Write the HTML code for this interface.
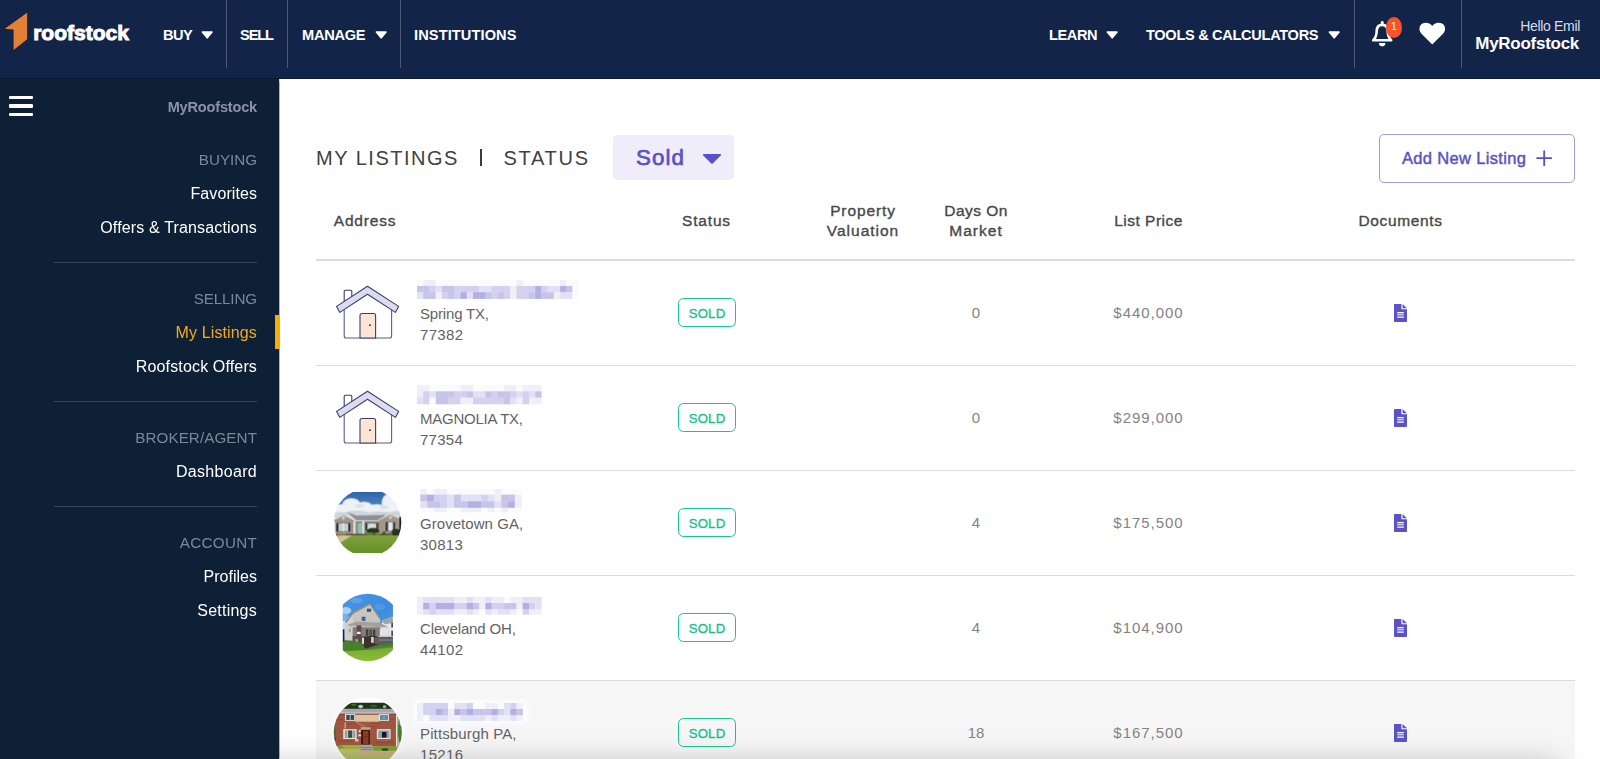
<!DOCTYPE html>
<html><head><meta charset="utf-8"><title>MyRoofstock</title>
<style>
*{box-sizing:border-box;margin:0;padding:0}
html,body{width:1600px;height:759px;overflow:hidden;background:#fff;font-family:"Liberation Sans",sans-serif;}
.abs{position:absolute}
#hdr{position:absolute;left:0;top:0;width:1600px;height:79px;background:#122448;border-bottom:1px solid #0b1737;}
.nv{position:absolute;top:25.6px;height:18px;line-height:18px;font-size:14.6px;font-weight:700;color:#fff;white-space:nowrap;transform-origin:0 50%;}
.vd{position:absolute;top:0;width:1px;height:68px;background:#4a5873;}
.car{position:absolute;width:0;height:0;border-left:6.5px solid transparent;border-right:6.5px solid transparent;border-top:7px solid #fff;top:31px}
#side{z-index:2;box-shadow:.5px 0 1px rgba(0,0,0,.3);position:absolute;left:0;top:79px;width:279px;height:680px;background:#0e2036;}
.si{position:absolute;right:22px;white-space:nowrap;color:#fff;font-size:16px;height:20px;line-height:20px;transform-origin:100% 50%;}
.sh{color:#7c8797;font-size:15.2px}
.sd{position:absolute;left:54px;width:203px;height:1px;background:#35465d}
#main{position:absolute;left:279px;top:79px;width:1321px;height:680px;background:#fff;}
.th{position:absolute;font-size:15.5px;font-weight:400;-webkit-text-stroke:.36px #484848;color:#484848;text-align:center;line-height:20px;white-space:nowrap;transform:translateX(-50%);}
.hl{position:absolute;left:316px;width:1259px;height:1px;background:#dcdcdc}
.sold{position:absolute;left:678px;width:58px;height:29.3px;border:1.3px solid #19c492;border-radius:5.5px;color:#12bf8c;font-size:13.2px;font-weight:400;-webkit-text-stroke:.32px #12bf8c;text-align:center;line-height:29.2px;letter-spacing:.2px}
.td{position:absolute;font-size:15px;color:#838383;text-align:center;white-space:nowrap;transform:translateX(-50%);line-height:20px;height:20px}
.ad{position:absolute;left:420px;font-size:15px;color:#636363;line-height:20.5px;white-space:nowrap}
.doc{position:absolute;left:1394px;width:13px;height:18px}
</style><style id="fit">#logo{letter-spacing:0.014px}#n1{letter-spacing:-0.556px}#n2{letter-spacing:-1.099px}#n3{letter-spacing:-0.275px}#n4{letter-spacing:0.104px}#n5{letter-spacing:-0.420px}#n6{letter-spacing:-0.321px}#hello{letter-spacing:-0.335px}#myr{letter-spacing:-0.273px}#s0{letter-spacing:-0.155px}#s1{letter-spacing:-0.007px}#s2{letter-spacing:0.075px}#s3{letter-spacing:0.153px}#s4{letter-spacing:-0.126px}#s5{letter-spacing:0.137px}#s6{letter-spacing:0.143px}#s7{letter-spacing:0.092px}#s8{letter-spacing:0.315px}#s9{letter-spacing:0.301px}#s10{letter-spacing:0.006px}#s11{letter-spacing:0.241px}#ttl{letter-spacing:1.507px}#sts{letter-spacing:1.712px}#sld{letter-spacing:1.120px}#anl{letter-spacing:0.340px}#h1{letter-spacing:0.804px}#h2{letter-spacing:0.809px}#h3a{letter-spacing:0.887px}#h3b{letter-spacing:0.989px}#h4a{letter-spacing:0.448px}#h4b{letter-spacing:1.025px}#h5{letter-spacing:0.494px}#h6{letter-spacing:0.649px}#a0a{letter-spacing:-0.177px}#a0b{letter-spacing:0.320px}#a1a{letter-spacing:-0.236px}#a1b{letter-spacing:0.270px}#a2a{letter-spacing:0.054px}#a2b{letter-spacing:0.270px}#a3a{letter-spacing:-0.129px}#a3b{letter-spacing:0.320px}#a4a{letter-spacing:0.132px}#a4b{letter-spacing:0.320px}#p0{letter-spacing:0.975px}#p1{letter-spacing:0.975px}#p2{letter-spacing:0.975px}#p3{letter-spacing:0.975px}#p4{letter-spacing:0.975px}</style></head><body>
<div id="hdr">
<svg class="abs" style="left:0;top:0" width="140" height="79" viewBox="0 0 140 79">
<polygon points="27.1,12.7 27.1,39.3 13.6,50.1 13.6,29.5 4.8,28.8" fill="#e38036"/>
</svg>
<div class="abs" id="logo" style="left:33.2px;top:20.4px;font-size:21px;font-weight:700;color:#fff;line-height:26px;-webkit-text-stroke:1px #fff">roofstock</div>
<div class="nv" id="n1" style="left:163px">BUY</div><svg class="abs" style="left:201px;top:30.6px" width="12.4" height="8" viewBox="0 0 12.4 8"><path d="M1.3 0.3 H11.1 a0.75 0.75 0 0 1 0.55 1.25 L6.85 7.35 a0.85 0.85 0 0 1 -1.3 0 L0.75 1.55 A0.75 0.75 0 0 1 1.3 0.3 Z" fill="#fff"/></svg>
<div class="vd" style="left:226px"></div>
<div class="nv" id="n2" style="left:240px">SELL</div>
<div class="vd" style="left:287px"></div>
<div class="nv" id="n3" style="left:302px">MANAGE</div><svg class="abs" style="left:374.7px;top:30.6px" width="12.4" height="8" viewBox="0 0 12.4 8"><path d="M1.3 0.3 H11.1 a0.75 0.75 0 0 1 0.55 1.25 L6.85 7.35 a0.85 0.85 0 0 1 -1.3 0 L0.75 1.55 A0.75 0.75 0 0 1 1.3 0.3 Z" fill="#fff"/></svg>
<div class="vd" style="left:400px"></div>
<div class="nv" id="n4" style="left:414px">INSTITUTIONS</div>
<div class="nv" id="n5" style="left:1049px">LEARN</div><svg class="abs" style="left:1106.4px;top:30.6px" width="12.4" height="8" viewBox="0 0 12.4 8"><path d="M1.3 0.3 H11.1 a0.75 0.75 0 0 1 0.55 1.25 L6.85 7.35 a0.85 0.85 0 0 1 -1.3 0 L0.75 1.55 A0.75 0.75 0 0 1 1.3 0.3 Z" fill="#fff"/></svg>
<div class="nv" id="n6" style="left:1146px">TOOLS &amp; CALCULATORS</div><svg class="abs" style="left:1328.2px;top:30.6px" width="12.4" height="8" viewBox="0 0 12.4 8"><path d="M1.3 0.3 H11.1 a0.75 0.75 0 0 1 0.55 1.25 L6.85 7.35 a0.85 0.85 0 0 1 -1.3 0 L0.75 1.55 A0.75 0.75 0 0 1 1.3 0.3 Z" fill="#fff"/></svg>
<div class="vd" style="left:1354px"></div>
<svg class="abs" style="left:1368px;top:18px" width="30" height="32" viewBox="0 0 30 32">
<path d="M14.2 6.9 C10.2 6.9 8.8 9.8 8.7 13 C8.6 17 7.8 19.8 5.2 22.3 L23.2 22.3 C20.6 19.8 19.8 17 19.7 13 C19.6 9.8 18.2 6.9 14.2 6.9 Z" fill="none" stroke="#fff" stroke-width="2.6" stroke-linejoin="round"/>
<rect x="12.8" y="3.1" width="2.9" height="4" rx="1.3" fill="#fff"/>
<path d="M11 25.1 a3.2 3.3 0 0 0 6.4 0 Z" fill="#fff"/>
</svg>
<div class="abs" style="left:1386px;top:16.8px;width:15.8px;height:21px;border-radius:50%;background:#f8532a;color:#fff;font-size:11px;line-height:19px;text-align:center">1</div>
<svg class="abs" style="left:1418.8px;top:22.2px" width="26.5" height="23.6" viewBox="0 0 26 24" preserveAspectRatio="none">
<path d="M13 23 L2.2 11.6 C-0.6 8.4 0 3.6 3.4 1.6 C6.4 -0.2 10.4 0.6 13 4 C15.6 0.6 19.6 -0.2 22.6 1.6 C26 3.6 26.6 8.4 23.8 11.6 Z" fill="#fff"/>
</svg>
<div class="vd" style="left:1461px"></div>
<div class="abs" id="hello" style="right:20px;top:17px;font-size:14px;color:#d9dde5;line-height:18px;white-space:nowrap">Hello Emil</div>
<div class="abs" id="myr" style="right:21px;top:34px;font-size:17px;font-weight:700;color:#fff;line-height:20px;white-space:nowrap">MyRoofstock</div>
</div>
<div id="side">
<div class="abs" style="left:9px;top:17px;width:24px;height:3.4px;background:#fff;border-radius:1px"></div>
<div class="abs" style="left:9px;top:25.3px;width:24px;height:3.4px;background:#fff;border-radius:1px"></div>
<div class="abs" style="left:9px;top:33.6px;width:24px;height:3.4px;background:#fff;border-radius:1px"></div>
<div class="si" id="s0" style="top:18px;color:#8a93a6;font-weight:700;font-size:14.5px">MyRoofstock</div>
<div class="si sh" id="s1" style="top:71.4px">BUYING</div>
<div class="si" id="s2" style="top:105.3px">Favorites</div>
<div class="si" id="s3" style="top:139.3px">Offers &amp; Transactions</div>
<div class="sd" style="top:182.6px"></div>
<div class="si sh" id="s4" style="top:210.4px">SELLING</div>
<div class="si" id="s5" style="top:244.3px;color:#f5a81c">My Listings</div>
<div class="abs" style="left:275px;top:236px;width:4.8px;height:34px;background:#fbaa08"></div>
<div class="si" id="s6" style="top:278.3px">Roofstock Offers</div>
<div class="sd" style="top:322px"></div>
<div class="si sh" id="s7" style="top:349.4px">BROKER/AGENT</div>
<div class="si" id="s8" style="top:383.3px">Dashboard</div>
<div class="sd" style="top:426.8px"></div>
<div class="si sh" id="s9" style="top:454.4px">ACCOUNT</div>
<div class="si" id="s10" style="top:488.3px">Profiles</div>
<div class="si" id="s11" style="top:522.3px">Settings</div>
</div>
<div id="main"></div>
<div class="abs" id="ttl" style="left:316px;top:145px;font-size:20px;line-height:26px;color:#414141;white-space:nowrap">MY LISTINGS</div>
<div class="abs" style="left:480px;top:149px;width:2.2px;height:17px;background:#3a3a3a"></div>
<div class="abs" id="sts" style="left:503.5px;top:145px;font-size:20px;line-height:26px;color:#414141;white-space:nowrap">STATUS</div>
<div class="abs" style="left:613px;top:135px;width:121.3px;height:45px;background:#eeedf9;border-radius:5px"></div>
<div class="abs" id="sld" style="left:636px;top:143.4px;font-size:22.3px;font-weight:400;-webkit-text-stroke:.7px #5a51c8;line-height:30px;color:#5a51c8;white-space:nowrap">Sold</div>
<svg class="abs" style="left:702px;top:153px" width="20" height="12" viewBox="0 0 20 12"><path d="M1.6 1 H18.4 a0.8 0.8 0 0 1 0.6 1.3 L10.7 10.6 a1 1 0 0 1 -1.4 0 L1 2.3 A0.8 0.8 0 0 1 1.6 1 Z" fill="#5a51c8"/></svg>
<div class="abs" style="left:1379px;top:133.5px;width:196px;height:49px;border:1px solid #a19ce2;border-radius:5px;background:#fff"></div>
<div class="abs" id="anl" style="left:1402px;top:147px;font-size:16.5px;font-weight:400;-webkit-text-stroke:.45px #5952c5;line-height:22px;color:#5952c5;white-space:nowrap">Add New Listing</div>
<svg class="abs" style="left:1535.5px;top:150px" width="16.4" height="16.4" viewBox="0 0 18 18"><path d="M9 1.2 V16.8 M1.2 9 H16.8" stroke="#574fc4" stroke-width="2" stroke-linecap="round"/></svg>
<div class="th" id="h1" style="left:365px;top:211px">Address</div>
<div class="th" id="h2" style="left:706.5px;top:211px">Status</div>
<div class="th" id="h3" style="left:863px;top:201px"><span id="h3a">Property</span><br><span id="h3b">Valuation</span></div>
<div class="th" id="h4" style="left:976px;top:201px"><span id="h4a">Days On</span><br><span id="h4b">Market</span></div>
<div class="th" id="h5" style="left:1148.5px;top:211px">List Price</div>
<div class="th" id="h6" style="left:1400.5px;top:211px">Documents</div>
<div class="hl" style="top:259.3px;height:1.4px"></div>
<svg class="abs" style="left:334px;top:284.8px" width="68" height="58" viewBox="0 0 68 58">
<path d="M10.2 17.5 V6.2 a1 1 0 0 1 1 -1 h5.6 a1 1 0 0 1 1 1 V12" fill="#fff" stroke="#3a3d6b" stroke-width="1.1"/>
<path d="M10.2 24 V51 a2 2 0 0 0 2 2 H55.6 a2 2 0 0 0 2 -2 V24" fill="#fff" stroke="#5b5f8e" stroke-width="1.1"/>
<path d="M33.5 1.2 L2.6 21.4 L5.8 27.4 L33.5 9.2 L61.4 27.4 L64.6 21.4 Z" fill="#dcdcf1" stroke="#3a3d6b" stroke-width="1.1" stroke-linejoin="round"/>
<path d="M26 53 V30.5 a2 2 0 0 1 2 -2 h11.6 a2 2 0 0 1 2 2 V53 Z" fill="#fde5d6" stroke="#3a3d6b" stroke-width="1.1"/>
<circle cx="36" cy="40.2" r="0.9" fill="#23264f"/>
</svg>
<div class="ad" id="a0" style="top:304px"><span id="a0a">Spring TX,</span><br><span id="a0b">77382</span></div>
<div class="sold" style="top:298px">SOLD</div>
<div class="td" id="d0" style="left:976px;top:303px">0</div>
<div class="td" id="p0" style="left:1148.5px;top:303px">$440,000</div>
<svg class="doc" style="top:304px" viewBox="0 0 13 18"><path d="M0.8 0 H7.4 V4.4 a0.9 0.9 0 0 0 0.9 0.9 H13 V17.2 a0.8 0.8 0 0 1 -0.8 0.8 H0.8 a0.8 0.8 0 0 1 -0.8 -0.8 V0.8 a0.8 0.8 0 0 1 0.8 -0.8 Z M8.6 0.1 L13 4.2 H8.6 Z" fill="#5a53c7"/><path d="M3.2 8.6 h6.6 M3.2 10.8 h6.6 M3.2 13.1 h6.6" stroke="#fff" stroke-width="1.1"/></svg>
<div class="hl" style="top:364.5px;height:1.3px"></div>
<svg class="abs" style="left:334px;top:389.8px" width="68" height="58" viewBox="0 0 68 58">
<path d="M10.2 17.5 V6.2 a1 1 0 0 1 1 -1 h5.6 a1 1 0 0 1 1 1 V12" fill="#fff" stroke="#3a3d6b" stroke-width="1.1"/>
<path d="M10.2 24 V51 a2 2 0 0 0 2 2 H55.6 a2 2 0 0 0 2 -2 V24" fill="#fff" stroke="#5b5f8e" stroke-width="1.1"/>
<path d="M33.5 1.2 L2.6 21.4 L5.8 27.4 L33.5 9.2 L61.4 27.4 L64.6 21.4 Z" fill="#dcdcf1" stroke="#3a3d6b" stroke-width="1.1" stroke-linejoin="round"/>
<path d="M26 53 V30.5 a2 2 0 0 1 2 -2 h11.6 a2 2 0 0 1 2 2 V53 Z" fill="#fde5d6" stroke="#3a3d6b" stroke-width="1.1"/>
<circle cx="36" cy="40.2" r="0.9" fill="#23264f"/>
</svg>
<div class="ad" id="a1" style="top:409px"><span id="a1a">MAGNOLIA TX,</span><br><span id="a1b">77354</span></div>
<div class="sold" style="top:403px">SOLD</div>
<div class="td" id="d1" style="left:976px;top:408px">0</div>
<div class="td" id="p1" style="left:1148.5px;top:408px">$299,000</div>
<svg class="doc" style="top:409px" viewBox="0 0 13 18"><path d="M0.8 0 H7.4 V4.4 a0.9 0.9 0 0 0 0.9 0.9 H13 V17.2 a0.8 0.8 0 0 1 -0.8 0.8 H0.8 a0.8 0.8 0 0 1 -0.8 -0.8 V0.8 a0.8 0.8 0 0 1 0.8 -0.8 Z M8.6 0.1 L13 4.2 H8.6 Z" fill="#5a53c7"/><path d="M3.2 8.6 h6.6 M3.2 10.8 h6.6 M3.2 13.1 h6.6" stroke="#fff" stroke-width="1.1"/></svg>
<div class="hl" style="top:469.5px;height:1.3px"></div>
<svg class="abs" style="left:325px;top:482px" width="86" height="80" viewBox="0 0 816 759">
<defs><clipPath id="c1"><circle cx="403.5" cy="384" r="321"/></clipPath><clipPath id="c1b"><rect x="0" y="101" width="816" height="567"/></clipPath>
<linearGradient id="sk1" x1="0" y1="0" x2="0" y2="1"><stop offset="0" stop-color="#2a61a6"/><stop offset="1" stop-color="#6f9fd2"/></linearGradient>
<linearGradient id="gr1" x1="0" y1="0" x2="0" y2="1"><stop offset="0" stop-color="#7ea23a"/><stop offset="1" stop-color="#648f28"/></linearGradient>
<filter id="b1" x="-5%" y="-5%" width="110%" height="110%"><feGaussianBlur stdDeviation="5"/></filter></defs>
<g clip-path="url(#c1b)"><g clip-path="url(#c1)"><g filter="url(#b1)">
<rect x="60" y="80" width="700" height="260" fill="url(#sk1)"/>
<g fill="#eef1f5"><ellipse cx="250" cy="215" rx="85" ry="62"/><ellipse cx="370" cy="245" rx="85" ry="58"/><ellipse cx="160" cy="270" rx="85" ry="60"/><ellipse cx="490" cy="265" rx="105" ry="55"/><ellipse cx="600" cy="195" rx="62" ry="80"/><ellipse cx="650" cy="260" rx="85" ry="65"/><rect x="60" y="265" width="700" height="70"/></g>
<g fill="#c3cad3" opacity=".75"><ellipse cx="300" cy="300" rx="120" ry="28"/><ellipse cx="520" cy="305" rx="130" ry="25"/><ellipse cx="140" cy="310" rx="70" ry="25"/><ellipse cx="680" cy="300" rx="60" ry="25"/><ellipse cx="330" cy="225" rx="40" ry="18" opacity=".5"/><ellipse cx="560" cy="240" rx="40" ry="20" opacity=".5"/></g>
<polygon points="215,288 300,318 572,312 520,368 380,368 290,362" fill="#8c8f96"/>
<polygon points="88,352 178,310 292,364 292,380 88,380" fill="#8c8f96"/>
<polygon points="503,360 618,303 716,346 716,380 503,380" fill="#8c8f96"/>
<polygon points="95,358 178,320 288,368 288,498 95,498" fill="#a09585"/>
<rect x="285" y="366" width="235" height="132" fill="#8c8172"/>
<polygon points="515,362 618,313 712,352 712,498 515,498" fill="#a39888"/>
<g stroke="#eeeeee" stroke-width="8" fill="none"><path d="M90 354 L178 314 L290 366"/><path d="M505 360 L618 307 L714 348"/><path d="M288 368 H515"/></g>
<circle cx="175" cy="343" r="14" fill="#d9d4cc"/><circle cx="620" cy="338" r="14" fill="#d9d4cc"/>
<rect x="108" y="390" width="132" height="80" fill="#272a35"/><rect x="127" y="393" width="94" height="74" fill="#c3cdce"/><rect x="168" y="390" width="12" height="80" fill="#f0f0f0"/>
<rect x="386" y="392" width="116" height="66" fill="#272a35"/><rect x="402" y="394" width="84" height="62" fill="#d3dbde"/><rect x="438" y="392" width="10" height="66" fill="#f0f0f0"/>
<rect x="576" y="380" width="88" height="86" fill="#272a35"/><rect x="597" y="382" width="48" height="82" fill="#dfe7eb"/>
<rect x="270" y="370" width="20" height="128" fill="#e8e6e2"/><rect x="352" y="370" width="20" height="128" fill="#e8e6e2"/>
<rect x="311" y="392" width="40" height="98" fill="#8bc3bf"/>
<rect x="100" y="492" width="610" height="20" fill="#5d4b3a"/>
<ellipse cx="455" cy="465" rx="58" ry="30" fill="#25321e"/><ellipse cx="425" cy="492" rx="40" ry="14" fill="#5f7f3c"/><ellipse cx="495" cy="492" rx="25" ry="14" fill="#6a8a44"/>
<ellipse cx="672" cy="477" rx="40" ry="32" fill="#25321e"/><ellipse cx="560" cy="488" rx="18" ry="20" fill="#3e5c2c"/><ellipse cx="620" cy="492" rx="22" ry="12" fill="#5a7a3a"/>
<ellipse cx="160" cy="494" rx="45" ry="10" fill="#8a9a55"/>
<rect x="705" y="330" width="30" height="170" fill="#1e291b"/>
<rect x="60" y="508" width="700" height="180" fill="url(#gr1)"/>
<polygon points="100,512 255,507 150,572 110,560" fill="#d9bea3"/>
</g></g></g></svg>
<div class="ad" id="a2" style="top:514px"><span id="a2a">Grovetown GA,</span><br><span id="a2b">30813</span></div>
<div class="sold" style="top:508px">SOLD</div>
<div class="td" id="d2" style="left:976px;top:513px">4</div>
<div class="td" id="p2" style="left:1148.5px;top:513px">$175,500</div>
<svg class="doc" style="top:514px" viewBox="0 0 13 18"><path d="M0.8 0 H7.4 V4.4 a0.9 0.9 0 0 0 0.9 0.9 H13 V17.2 a0.8 0.8 0 0 1 -0.8 0.8 H0.8 a0.8 0.8 0 0 1 -0.8 -0.8 V0.8 a0.8 0.8 0 0 1 0.8 -0.8 Z M8.6 0.1 L13 4.2 H8.6 Z" fill="#5a53c7"/><path d="M3.2 8.6 h6.6 M3.2 10.8 h6.6 M3.2 13.1 h6.6" stroke="#fff" stroke-width="1.1"/></svg>
<div class="hl" style="top:574.5px;height:1.3px"></div>
<svg class="abs" style="left:325px;top:588px" width="86" height="80" viewBox="0 0 816 759">
<defs><clipPath id="c2"><circle cx="406" cy="374" r="320"/></clipPath><clipPath id="c2b"><rect x="168" y="0" width="477" height="759"/></clipPath>
<linearGradient id="sk2" x1="0" y1="0" x2="1" y2="1"><stop offset="0" stop-color="#4f97e4"/><stop offset=".5" stop-color="#3b8be0"/><stop offset="1" stop-color="#5fa3e6"/></linearGradient>
<linearGradient id="gr2" x1="0" y1="0" x2="0" y2="1"><stop offset="0" stop-color="#74ad2c"/><stop offset="1" stop-color="#8fc03c"/></linearGradient>
<filter id="b2" x="-5%" y="-5%" width="110%" height="110%"><feGaussianBlur stdDeviation="5"/></filter></defs>
<g clip-path="url(#c2b)"><g clip-path="url(#c2)"><g filter="url(#b2)">
<rect x="100" y="30" width="620" height="560" fill="url(#sk2)"/>
<ellipse cx="200" cy="215" rx="50" ry="34" fill="#b5d4f4" opacity=".9"/><ellipse cx="190" cy="290" rx="40" ry="50" fill="#8fbdee" opacity=".7"/><ellipse cx="180" cy="350" rx="25" ry="40" fill="#cfe3f7" opacity=".9"/><ellipse cx="300" cy="120" rx="60" ry="25" fill="#6aa8ea" opacity=".7"/><ellipse cx="520" cy="180" rx="50" ry="30" fill="#5da0e8" opacity=".6"/>
<rect x="168" y="470" width="480" height="120" fill="#55603f"/><polygon points="540,310 640,272 660,300 660,520 530,520" fill="#e6e7ec"/>
<polygon points="535,315 640,270 650,330 570,345" fill="#9fa3a6"/>
<rect x="583" y="395" width="16" height="60" fill="#2c3340"/><rect x="630" y="330" width="14" height="45" fill="#2c3340"/><rect x="630" y="405" width="14" height="50" fill="#2c3340"/>
<polygon points="185,330 270,232 270,500 185,495" fill="#d3d0ca"/>
<polygon points="265,238 425,150 528,292 520,335 265,335" fill="#c9c6c0"/>
<polygon points="190,322 262,228 425,143 535,298 520,298 425,160 272,242 200,335" fill="#8f8c88"/>
<polygon points="215,348 300,318 520,330 605,375 250,372" fill="#a5a19a"/>
<polygon points="250,360 600,372 600,385 250,375" fill="#d8d5cf"/>
<rect x="262" y="372" width="262" height="130" fill="#857e72"/><rect x="262" y="455" width="262" height="50" fill="#5a554e"/>
<rect x="520" y="385" width="80" height="75" fill="#e4e4e8"/>
<rect x="398" y="196" width="40" height="30" fill="#3f5580"/><rect x="348" y="272" width="36" height="40" fill="#4b6190"/>
<rect x="225" y="385" width="18" height="35" fill="#9aa0a8"/>
<rect x="388" y="392" width="22" height="60" fill="#374152"/><rect x="420" y="395" width="26" height="60" fill="#4a5263"/><rect x="455" y="395" width="22" height="58" fill="#374152"/>
<rect x="300" y="355" width="45" height="150" fill="#5e4a52"/><rect x="302" y="415" width="36" height="22" fill="#e9e9e9"/>
<rect x="500" y="455" width="145" height="85" fill="#565b5e"/><rect x="505" y="455" width="140" height="9" fill="#c9cbce"/><rect x="505" y="490" width="140" height="7" fill="#9a9da0"/>
<polygon points="345,470 470,450 500,470 500,545 380,575" fill="#3d302b"/><rect x="470" y="470" width="40" height="60" fill="#6b5a50"/>
<rect x="352" y="470" width="18" height="60" fill="#e3e3e3"/><rect x="438" y="465" width="24" height="55" fill="#d9d9d9"/><rect x="290" y="485" width="22" height="45" fill="#c9a98a"/>
<rect x="168" y="395" width="14" height="120" fill="#1d241c"/>
<polygon points="168,510 300,505 360,545 380,580 480,545 645,520 645,700 168,700" fill="#47802a"/>
<polygon points="168,600 330,590 420,585 645,560 645,720 168,720" fill="url(#gr2)"/>
<polygon points="400,578 640,548 645,562 420,590" fill="#6f7a5a" opacity=".7"/>
</g></g></g></svg>
<div class="ad" id="a3" style="top:619px"><span id="a3a">Cleveland OH,</span><br><span id="a3b">44102</span></div>
<div class="sold" style="top:613px">SOLD</div>
<div class="td" id="d3" style="left:976px;top:618px">4</div>
<div class="td" id="p3" style="left:1148.5px;top:618px">$104,900</div>
<svg class="doc" style="top:619px" viewBox="0 0 13 18"><path d="M0.8 0 H7.4 V4.4 a0.9 0.9 0 0 0 0.9 0.9 H13 V17.2 a0.8 0.8 0 0 1 -0.8 0.8 H0.8 a0.8 0.8 0 0 1 -0.8 -0.8 V0.8 a0.8 0.8 0 0 1 0.8 -0.8 Z M8.6 0.1 L13 4.2 H8.6 Z" fill="#5a53c7"/><path d="M3.2 8.6 h6.6 M3.2 10.8 h6.6 M3.2 13.1 h6.6" stroke="#fff" stroke-width="1.1"/></svg>
<div class="abs" style="left:316px;top:681px;width:1259px;height:105px;background:#f6f6f6"></div>
<div class="hl" style="top:679.5px;height:1.3px"></div>
<svg class="abs" style="left:325px;top:693px" width="86" height="66" viewBox="0 0 989 759">
<defs><clipPath id="c3"><circle cx="492" cy="454" r="392"/></clipPath><clipPath id="c3b"><rect x="0" y="113" width="989" height="700"/></clipPath>
<filter id="b3" x="-5%" y="-5%" width="110%" height="110%"><feGaussianBlur stdDeviation="5"/></filter>
<filter id="b3w" x="-10%" y="-10%" width="120%" height="120%"><feGaussianBlur stdDeviation="12"/></filter></defs>
<circle cx="492" cy="454" r="408" fill="#fff" filter="url(#b3w)"/>
<g clip-path="url(#c3b)"><g clip-path="url(#c3)"><g filter="url(#b3)">
<rect x="80" y="100" width="830" height="700" fill="#9f5641"/>
<rect x="80" y="100" width="830" height="85" fill="#1d3517"/>
<ellipse cx="410" cy="155" rx="28" ry="20" fill="#b9c6d3"/><ellipse cx="685" cy="158" rx="20" ry="16" fill="#9fb0bd"/><ellipse cx="330" cy="135" rx="30" ry="14" fill="#3f6a2e"/><ellipse cx="560" cy="150" rx="40" ry="14" fill="#35592a"/>
<polygon points="212,180 772,180 820,236 168,236" fill="#aaa4ae"/>
<rect x="170" y="224" width="650" height="16" fill="#cfcbce"/>
<rect x="165" y="238" width="660" height="10" fill="#6a3a30"/>
<g fill="#8e3f2e" opacity=".55"><rect x="130" y="300" width="80" height="14"/><rect x="250" y="350" width="110" height="12"/><rect x="540" y="345" width="200" height="14"/><rect x="150" y="545" width="180" height="14"/><rect x="560" y="560" width="230" height="14"/><rect x="500" y="380" width="90" height="12"/><rect x="740" y="290" width="70" height="14"/></g>
<g fill="#ba6048" opacity=".6"><rect x="140" y="380" width="70" height="12"/><rect x="640" y="350" width="120" height="10"/><rect x="560" y="540" width="160" height="10"/><rect x="380" y="350" width="100" height="10"/></g>
<rect x="230" y="242" width="116" height="78" fill="#e9e7e2"/><rect x="244" y="252" width="92" height="58" fill="#3a4759"/><rect x="285" y="248" width="8" height="66" fill="#e9e7e2"/>
<rect x="346" y="250" width="276" height="80" fill="#dcc3a0"/>
<rect x="620" y="242" width="116" height="78" fill="#e9e7e2"/><rect x="632" y="252" width="94" height="58" fill="#6888aa"/><rect x="675" y="250" width="6" height="60" fill="#9fb4c8"/>
<path d="M350 328 L470 400" stroke="#c89478" stroke-width="9"/>
<rect x="224" y="338" width="18" height="70" fill="#d9b8a4" opacity=".7"/>
<rect x="210" y="416" width="154" height="114" fill="#e6e4df"/><rect x="228" y="430" width="120" height="86" fill="#8e9da8"/><rect x="266" y="432" width="48" height="82" fill="#3d4b3a"/><rect x="258" y="430" width="7" height="86" fill="#e6e4df"/><rect x="316" y="430" width="7" height="86" fill="#e6e4df"/>
<rect x="596" y="416" width="158" height="114" fill="#e6e4df"/><rect x="612" y="430" width="128" height="86" fill="#8d9eae"/><rect x="655" y="448" width="52" height="64" fill="#15171c"/>
<rect x="410" y="394" width="112" height="28" fill="#b9a88f"/>
<rect x="416" y="426" width="100" height="168" fill="#36130f"/><rect x="436" y="436" width="64" height="150" fill="#8a3e24"/><rect x="436" y="500" width="64" height="8" fill="#6b2f1a"/>
<rect x="388" y="424" width="22" height="28" fill="#e5e0d8"/><rect x="382" y="476" width="34" height="22" fill="#d9d9dc"/><rect x="345" y="530" width="40" height="28" fill="#c9c9cc"/>
<rect x="816" y="246" width="16" height="390" fill="#e9e6e0"/>
<rect x="834" y="240" width="80" height="420" fill="#c9bfa8"/><ellipse cx="865" cy="430" rx="26" ry="150" fill="#4c7a2e"/><ellipse cx="872" cy="330" rx="14" ry="50" fill="#a9c9d9"/>
<ellipse cx="108" cy="450" rx="16" ry="80" fill="#47702c"/><rect x="100" y="510" width="22" height="40" fill="#3a3a3a"/>
<rect x="120" y="612" width="720" height="200" fill="#b9bd74"/>
<rect x="150" y="598" width="260" height="46" rx="20" fill="#9cb43a"/><ellipse cx="180" cy="620" rx="30" ry="18" fill="#7f9a34"/>
<rect x="548" y="612" width="280" height="52" rx="20" fill="#7e9f3a"/><ellipse cx="690" cy="650" rx="40" ry="14" fill="#3b4a2a"/>
<rect x="408" y="596" width="134" height="66" fill="#a8a8a2"/><rect x="408" y="622" width="134" height="8" fill="#77776f"/><rect x="408" y="648" width="134" height="8" fill="#77776f"/>
<polygon points="385,662 800,676 800,704 385,686" fill="#d3a48f"/>
<rect x="120" y="700" width="740" height="80" fill="#b4bb6a"/>
</g></g></g></svg>
<div class="ad" id="a4" style="top:724px"><span id="a4a">Pittsburgh PA,</span><br><span id="a4b">15216</span></div>
<div class="sold" style="top:718px">SOLD</div>
<div class="td" id="d4" style="left:976px;top:723px">18</div>
<div class="td" id="p4" style="left:1148.5px;top:723px">$167,500</div>
<svg class="doc" style="top:724px" viewBox="0 0 13 18"><path d="M0.8 0 H7.4 V4.4 a0.9 0.9 0 0 0 0.9 0.9 H13 V17.2 a0.8 0.8 0 0 1 -0.8 0.8 H0.8 a0.8 0.8 0 0 1 -0.8 -0.8 V0.8 a0.8 0.8 0 0 1 0.8 -0.8 Z M8.6 0.1 L13 4.2 H8.6 Z" fill="#5a53c7"/><path d="M3.2 8.6 h6.6 M3.2 10.8 h6.6 M3.2 13.1 h6.6" stroke="#fff" stroke-width="1.1"/></svg>
<div class="abs" style="left:240px;top:772px;width:1310px;height:40px;z-index:1;box-shadow:0 0 30px 8px rgba(0,0,0,.25)"></div>
<svg class="abs" style="left:0;top:0;pointer-events:none" width="1600" height="759" viewBox="0 0 1600 759"><defs><filter id="pb"><feGaussianBlur stdDeviation="0.5"/></filter><filter id="pw"><feGaussianBlur stdDeviation="2"/></filter></defs><rect x="414" y="700" width="114" height="23" fill="#fdfdfd" filter="url(#pw)"/><g filter="url(#pb)"><rect x="417.0" y="280" width="6.5" height="6.2" fill="#fbfbfe"/><rect x="423.2" y="280" width="6.5" height="6.2" fill="#f0eff9"/><rect x="429.4" y="280" width="6.5" height="6.2" fill="#f0eff9"/><rect x="435.7" y="280" width="6.5" height="6.2" fill="#fbfbfe"/><rect x="441.9" y="280" width="6.5" height="6.2" fill="#fbfbfe"/><rect x="448.1" y="280" width="6.5" height="6.2" fill="#fbfbfe"/><rect x="454.3" y="280" width="6.5" height="6.2" fill="#fbfbfe"/><rect x="460.5" y="280" width="6.5" height="6.2" fill="#fbfbfe"/><rect x="466.8" y="280" width="6.5" height="6.2" fill="#fbfbfe"/><rect x="473.0" y="280" width="6.5" height="6.2" fill="#fbfbfe"/><rect x="479.2" y="280" width="6.5" height="6.2" fill="#fbfbfe"/><rect x="485.4" y="280" width="6.5" height="6.2" fill="#fbfbfe"/><rect x="491.6" y="280" width="6.5" height="6.2" fill="#fbfbfe"/><rect x="497.9" y="280" width="6.5" height="6.2" fill="#fbfbfe"/><rect x="504.1" y="280" width="6.5" height="6.2" fill="#fbfbfe"/><rect x="510.3" y="280" width="6.5" height="6.2" fill="#fbfbfe"/><rect x="516.5" y="280" width="6.5" height="6.2" fill="#f0eff9"/><rect x="522.7" y="280" width="6.5" height="6.2" fill="#fbfbfe"/><rect x="529.0" y="280" width="6.5" height="6.2" fill="#fbfbfe"/><rect x="535.2" y="280" width="6.5" height="6.2" fill="#fbfbfe"/><rect x="541.4" y="280" width="6.5" height="6.2" fill="#fbfbfe"/><rect x="547.6" y="280" width="6.5" height="6.2" fill="#fbfbfe"/><rect x="553.8" y="280" width="6.5" height="6.2" fill="#fbfbfe"/><rect x="560.1" y="280" width="6.5" height="6.2" fill="#f0eff9"/><rect x="566.3" y="280" width="6.5" height="6.2" fill="#fbfbfe"/><rect x="572.5" y="280" width="6.5" height="6.2" fill="#fbfbfe"/><rect x="417.0" y="285.9" width="6.5" height="6.6" fill="#c7c4ea"/><rect x="423.2" y="285.9" width="6.5" height="6.6" fill="#c7c4ea"/><rect x="429.4" y="285.9" width="6.5" height="6.6" fill="#d3d1ef"/><rect x="435.7" y="285.9" width="6.5" height="6.6" fill="#e1e0f4"/><rect x="441.9" y="285.9" width="6.5" height="6.6" fill="#c7c4ea"/><rect x="448.1" y="285.9" width="6.5" height="6.6" fill="#c7c4ea"/><rect x="454.3" y="285.9" width="6.5" height="6.6" fill="#d3d1ef"/><rect x="460.5" y="285.9" width="6.5" height="6.6" fill="#d3d1ef"/><rect x="466.8" y="285.9" width="6.5" height="6.6" fill="#d3d1ef"/><rect x="473.0" y="285.9" width="6.5" height="6.6" fill="#d3d1ef"/><rect x="479.2" y="285.9" width="6.5" height="6.6" fill="#e1e0f4"/><rect x="485.4" y="285.9" width="6.5" height="6.6" fill="#e1e0f4"/><rect x="491.6" y="285.9" width="6.5" height="6.6" fill="#d3d1ef"/><rect x="497.9" y="285.9" width="6.5" height="6.6" fill="#d3d1ef"/><rect x="504.1" y="285.9" width="6.5" height="6.6" fill="#d3d1ef"/><rect x="510.3" y="285.9" width="6.5" height="6.6" fill="#f0eff9"/><rect x="516.5" y="285.9" width="6.5" height="6.6" fill="#d3d1ef"/><rect x="522.7" y="285.9" width="6.5" height="6.6" fill="#d3d1ef"/><rect x="529.0" y="285.9" width="6.5" height="6.6" fill="#d3d1ef"/><rect x="535.2" y="285.9" width="6.5" height="6.6" fill="#b4afe2"/><rect x="541.4" y="285.9" width="6.5" height="6.6" fill="#d3d1ef"/><rect x="547.6" y="285.9" width="6.5" height="6.6" fill="#e1e0f4"/><rect x="553.8" y="285.9" width="6.5" height="6.6" fill="#e1e0f4"/><rect x="560.1" y="285.9" width="6.5" height="6.6" fill="#b4afe2"/><rect x="566.3" y="285.9" width="6.5" height="6.6" fill="#c7c4ea"/><rect x="572.5" y="285.9" width="6.5" height="6.6" fill="#fbfbfe"/><rect x="417.0" y="292.2" width="6.5" height="6.7" fill="#e1e0f4"/><rect x="423.2" y="292.2" width="6.5" height="6.7" fill="#c7c4ea"/><rect x="429.4" y="292.2" width="6.5" height="6.7" fill="#c7c4ea"/><rect x="435.7" y="292.2" width="6.5" height="6.7" fill="#f0eff9"/><rect x="441.9" y="292.2" width="6.5" height="6.7" fill="#d3d1ef"/><rect x="448.1" y="292.2" width="6.5" height="6.7" fill="#c7c4ea"/><rect x="454.3" y="292.2" width="6.5" height="6.7" fill="#d3d1ef"/><rect x="460.5" y="292.2" width="6.5" height="6.7" fill="#b4afe2"/><rect x="466.8" y="292.2" width="6.5" height="6.7" fill="#e1e0f4"/><rect x="473.0" y="292.2" width="6.5" height="6.7" fill="#b4afe2"/><rect x="479.2" y="292.2" width="6.5" height="6.7" fill="#b4afe2"/><rect x="485.4" y="292.2" width="6.5" height="6.7" fill="#c7c4ea"/><rect x="491.6" y="292.2" width="6.5" height="6.7" fill="#d3d1ef"/><rect x="497.9" y="292.2" width="6.5" height="6.7" fill="#c7c4ea"/><rect x="504.1" y="292.2" width="6.5" height="6.7" fill="#d3d1ef"/><rect x="510.3" y="292.2" width="6.5" height="6.7" fill="#f0eff9"/><rect x="516.5" y="292.2" width="6.5" height="6.7" fill="#d3d1ef"/><rect x="522.7" y="292.2" width="6.5" height="6.7" fill="#d3d1ef"/><rect x="529.0" y="292.2" width="6.5" height="6.7" fill="#c7c4ea"/><rect x="535.2" y="292.2" width="6.5" height="6.7" fill="#b4afe2"/><rect x="541.4" y="292.2" width="6.5" height="6.7" fill="#c7c4ea"/><rect x="547.6" y="292.2" width="6.5" height="6.7" fill="#c7c4ea"/><rect x="553.8" y="292.2" width="6.5" height="6.7" fill="#f0eff9"/><rect x="560.1" y="292.2" width="6.5" height="6.7" fill="#e1e0f4"/><rect x="566.3" y="292.2" width="6.5" height="6.7" fill="#e1e0f4"/><rect x="572.5" y="292.2" width="6.5" height="6.7" fill="#fbfbfe"/><rect x="417.0" y="385" width="6.5" height="6.6" fill="#f0eff9"/><rect x="423.2" y="385" width="6.5" height="6.6" fill="#f0eff9"/><rect x="429.4" y="385" width="6.5" height="6.6" fill="#fbfbfe"/><rect x="435.7" y="385" width="6.5" height="6.6" fill="#fbfbfe"/><rect x="441.9" y="385" width="6.5" height="6.6" fill="#fbfbfe"/><rect x="448.1" y="385" width="6.5" height="6.6" fill="#fbfbfe"/><rect x="454.3" y="385" width="6.5" height="6.6" fill="#fbfbfe"/><rect x="460.5" y="385" width="6.5" height="6.6" fill="#f0eff9"/><rect x="466.8" y="385" width="6.5" height="6.6" fill="#f0eff9"/><rect x="473.0" y="385" width="6.5" height="6.6" fill="#fbfbfe"/><rect x="479.2" y="385" width="6.5" height="6.6" fill="#fbfbfe"/><rect x="485.4" y="385" width="6.5" height="6.6" fill="#fbfbfe"/><rect x="491.6" y="385" width="6.5" height="6.6" fill="#fbfbfe"/><rect x="497.9" y="385" width="6.5" height="6.6" fill="#fbfbfe"/><rect x="504.1" y="385" width="6.5" height="6.6" fill="#f0eff9"/><rect x="510.3" y="385" width="6.5" height="6.6" fill="#f0eff9"/><rect x="516.5" y="385" width="6.5" height="6.6" fill="#fbfbfe"/><rect x="522.7" y="385" width="6.5" height="6.6" fill="#f0eff9"/><rect x="529.0" y="385" width="6.5" height="6.6" fill="#f0eff9"/><rect x="535.2" y="385" width="6.5" height="6.6" fill="#f0eff9"/><rect x="417.0" y="391.3" width="6.5" height="6.6" fill="#f0eff9"/><rect x="423.2" y="391.3" width="6.5" height="6.6" fill="#d3d1ef"/><rect x="429.4" y="391.3" width="6.5" height="6.6" fill="#e1e0f4"/><rect x="435.7" y="391.3" width="6.5" height="6.6" fill="#c7c4ea"/><rect x="441.9" y="391.3" width="6.5" height="6.6" fill="#c7c4ea"/><rect x="448.1" y="391.3" width="6.5" height="6.6" fill="#c7c4ea"/><rect x="454.3" y="391.3" width="6.5" height="6.6" fill="#d3d1ef"/><rect x="460.5" y="391.3" width="6.5" height="6.6" fill="#d3d1ef"/><rect x="466.8" y="391.3" width="6.5" height="6.6" fill="#c7c4ea"/><rect x="473.0" y="391.3" width="6.5" height="6.6" fill="#e1e0f4"/><rect x="479.2" y="391.3" width="6.5" height="6.6" fill="#e1e0f4"/><rect x="485.4" y="391.3" width="6.5" height="6.6" fill="#c7c4ea"/><rect x="491.6" y="391.3" width="6.5" height="6.6" fill="#d3d1ef"/><rect x="497.9" y="391.3" width="6.5" height="6.6" fill="#c7c4ea"/><rect x="504.1" y="391.3" width="6.5" height="6.6" fill="#c7c4ea"/><rect x="510.3" y="391.3" width="6.5" height="6.6" fill="#d3d1ef"/><rect x="516.5" y="391.3" width="6.5" height="6.6" fill="#e1e0f4"/><rect x="522.7" y="391.3" width="6.5" height="6.6" fill="#d3d1ef"/><rect x="529.0" y="391.3" width="6.5" height="6.6" fill="#e1e0f4"/><rect x="535.2" y="391.3" width="6.5" height="6.6" fill="#c7c4ea"/><rect x="417.0" y="397.6" width="6.5" height="6.7" fill="#e1e0f4"/><rect x="423.2" y="397.6" width="6.5" height="6.7" fill="#d3d1ef"/><rect x="429.4" y="397.6" width="6.5" height="6.7" fill="#fbfbfe"/><rect x="435.7" y="397.6" width="6.5" height="6.7" fill="#c7c4ea"/><rect x="441.9" y="397.6" width="6.5" height="6.7" fill="#c7c4ea"/><rect x="448.1" y="397.6" width="6.5" height="6.7" fill="#d3d1ef"/><rect x="454.3" y="397.6" width="6.5" height="6.7" fill="#d3d1ef"/><rect x="460.5" y="397.6" width="6.5" height="6.7" fill="#f0eff9"/><rect x="466.8" y="397.6" width="6.5" height="6.7" fill="#f0eff9"/><rect x="473.0" y="397.6" width="6.5" height="6.7" fill="#d3d1ef"/><rect x="479.2" y="397.6" width="6.5" height="6.7" fill="#d3d1ef"/><rect x="485.4" y="397.6" width="6.5" height="6.7" fill="#d3d1ef"/><rect x="491.6" y="397.6" width="6.5" height="6.7" fill="#d3d1ef"/><rect x="497.9" y="397.6" width="6.5" height="6.7" fill="#d3d1ef"/><rect x="504.1" y="397.6" width="6.5" height="6.7" fill="#c7c4ea"/><rect x="510.3" y="397.6" width="6.5" height="6.7" fill="#e1e0f4"/><rect x="516.5" y="397.6" width="6.5" height="6.7" fill="#f0eff9"/><rect x="522.7" y="397.6" width="6.5" height="6.7" fill="#d3d1ef"/><rect x="529.0" y="397.6" width="6.5" height="6.7" fill="#f0eff9"/><rect x="535.2" y="397.6" width="6.5" height="6.7" fill="#f0eff9"/><rect x="420.3" y="489" width="7.0" height="5.9" fill="#f0eff9"/><rect x="427.1" y="489" width="7.0" height="5.9" fill="#fbfbfe"/><rect x="433.8" y="489" width="7.0" height="5.9" fill="#f0eff9"/><rect x="440.6" y="489" width="7.0" height="5.9" fill="#f0eff9"/><rect x="447.3" y="489" width="7.0" height="5.9" fill="#fbfbfe"/><rect x="454.1" y="489" width="7.0" height="5.9" fill="#fbfbfe"/><rect x="460.8" y="489" width="7.0" height="5.9" fill="#fbfbfe"/><rect x="467.6" y="489" width="7.0" height="5.9" fill="#fbfbfe"/><rect x="474.3" y="489" width="7.0" height="5.9" fill="#fbfbfe"/><rect x="481.1" y="489" width="7.0" height="5.9" fill="#fbfbfe"/><rect x="487.8" y="489" width="7.0" height="5.9" fill="#fbfbfe"/><rect x="494.6" y="489" width="7.0" height="5.9" fill="#f0eff9"/><rect x="501.3" y="489" width="7.0" height="5.9" fill="#fbfbfe"/><rect x="508.1" y="489" width="7.0" height="5.9" fill="#fbfbfe"/><rect x="514.8" y="489" width="7.0" height="5.9" fill="#fbfbfe"/><rect x="420.3" y="494.6" width="7.0" height="7.0" fill="#c7c4ea"/><rect x="427.1" y="494.6" width="7.0" height="7.0" fill="#b4afe2"/><rect x="433.8" y="494.6" width="7.0" height="7.0" fill="#d3d1ef"/><rect x="440.6" y="494.6" width="7.0" height="7.0" fill="#d3d1ef"/><rect x="447.3" y="494.6" width="7.0" height="7.0" fill="#e1e0f4"/><rect x="454.1" y="494.6" width="7.0" height="7.0" fill="#c7c4ea"/><rect x="460.8" y="494.6" width="7.0" height="7.0" fill="#e1e0f4"/><rect x="467.6" y="494.6" width="7.0" height="7.0" fill="#e1e0f4"/><rect x="474.3" y="494.6" width="7.0" height="7.0" fill="#e1e0f4"/><rect x="481.1" y="494.6" width="7.0" height="7.0" fill="#d3d1ef"/><rect x="487.8" y="494.6" width="7.0" height="7.0" fill="#e1e0f4"/><rect x="494.6" y="494.6" width="7.0" height="7.0" fill="#f0eff9"/><rect x="501.3" y="494.6" width="7.0" height="7.0" fill="#c7c4ea"/><rect x="508.1" y="494.6" width="7.0" height="7.0" fill="#c7c4ea"/><rect x="514.8" y="494.6" width="7.0" height="7.0" fill="#f0eff9"/><rect x="420.3" y="501.3" width="7.0" height="6.8" fill="#e1e0f4"/><rect x="427.1" y="501.3" width="7.0" height="6.8" fill="#c7c4ea"/><rect x="433.8" y="501.3" width="7.0" height="6.8" fill="#c7c4ea"/><rect x="440.6" y="501.3" width="7.0" height="6.8" fill="#d3d1ef"/><rect x="447.3" y="501.3" width="7.0" height="6.8" fill="#e1e0f4"/><rect x="454.1" y="501.3" width="7.0" height="6.8" fill="#c7c4ea"/><rect x="460.8" y="501.3" width="7.0" height="6.8" fill="#c7c4ea"/><rect x="467.6" y="501.3" width="7.0" height="6.8" fill="#b4afe2"/><rect x="474.3" y="501.3" width="7.0" height="6.8" fill="#b4afe2"/><rect x="481.1" y="501.3" width="7.0" height="6.8" fill="#c7c4ea"/><rect x="487.8" y="501.3" width="7.0" height="6.8" fill="#c7c4ea"/><rect x="494.6" y="501.3" width="7.0" height="6.8" fill="#e1e0f4"/><rect x="501.3" y="501.3" width="7.0" height="6.8" fill="#c7c4ea"/><rect x="508.1" y="501.3" width="7.0" height="6.8" fill="#b4afe2"/><rect x="514.8" y="501.3" width="7.0" height="6.8" fill="#f0eff9"/><rect x="420.3" y="507.8" width="7.0" height="4.5" fill="#fbfbfe"/><rect x="427.1" y="507.8" width="7.0" height="4.5" fill="#fbfbfe"/><rect x="433.8" y="507.8" width="7.0" height="4.5" fill="#f0eff9"/><rect x="440.6" y="507.8" width="7.0" height="4.5" fill="#f0eff9"/><rect x="447.3" y="507.8" width="7.0" height="4.5" fill="#fbfbfe"/><rect x="454.1" y="507.8" width="7.0" height="4.5" fill="#fbfbfe"/><rect x="460.8" y="507.8" width="7.0" height="4.5" fill="#f0eff9"/><rect x="467.6" y="507.8" width="7.0" height="4.5" fill="#f0eff9"/><rect x="474.3" y="507.8" width="7.0" height="4.5" fill="#f0eff9"/><rect x="481.1" y="507.8" width="7.0" height="4.5" fill="#fbfbfe"/><rect x="487.8" y="507.8" width="7.0" height="4.5" fill="#f0eff9"/><rect x="494.6" y="507.8" width="7.0" height="4.5" fill="#fbfbfe"/><rect x="501.3" y="507.8" width="7.0" height="4.5" fill="#f0eff9"/><rect x="508.1" y="507.8" width="7.0" height="4.5" fill="#fbfbfe"/><rect x="514.8" y="507.8" width="7.0" height="4.5" fill="#fbfbfe"/><rect x="417.0" y="597" width="6.5" height="6.3" fill="#f0eff9"/><rect x="423.2" y="597" width="6.5" height="6.3" fill="#e1e0f4"/><rect x="429.4" y="597" width="6.5" height="6.3" fill="#e1e0f4"/><rect x="435.7" y="597" width="6.5" height="6.3" fill="#e1e0f4"/><rect x="441.9" y="597" width="6.5" height="6.3" fill="#e1e0f4"/><rect x="448.1" y="597" width="6.5" height="6.3" fill="#e1e0f4"/><rect x="454.3" y="597" width="6.5" height="6.3" fill="#f0eff9"/><rect x="460.5" y="597" width="6.5" height="6.3" fill="#f0eff9"/><rect x="466.8" y="597" width="6.5" height="6.3" fill="#e1e0f4"/><rect x="473.0" y="597" width="6.5" height="6.3" fill="#f0eff9"/><rect x="479.2" y="597" width="6.5" height="6.3" fill="#f0eff9"/><rect x="485.4" y="597" width="6.5" height="6.3" fill="#e1e0f4"/><rect x="491.6" y="597" width="6.5" height="6.3" fill="#f0eff9"/><rect x="497.9" y="597" width="6.5" height="6.3" fill="#f0eff9"/><rect x="504.1" y="597" width="6.5" height="6.3" fill="#fbfbfe"/><rect x="510.3" y="597" width="6.5" height="6.3" fill="#f0eff9"/><rect x="516.5" y="597" width="6.5" height="6.3" fill="#f0eff9"/><rect x="522.7" y="597" width="6.5" height="6.3" fill="#e1e0f4"/><rect x="529.0" y="597" width="6.5" height="6.3" fill="#e1e0f4"/><rect x="535.2" y="597" width="6.5" height="6.3" fill="#e1e0f4"/><rect x="417.0" y="603" width="6.5" height="6.7" fill="#f0eff9"/><rect x="423.2" y="603" width="6.5" height="6.7" fill="#b4afe2"/><rect x="429.4" y="603" width="6.5" height="6.7" fill="#d3d1ef"/><rect x="435.7" y="603" width="6.5" height="6.7" fill="#b4afe2"/><rect x="441.9" y="603" width="6.5" height="6.7" fill="#b4afe2"/><rect x="448.1" y="603" width="6.5" height="6.7" fill="#b4afe2"/><rect x="454.3" y="603" width="6.5" height="6.7" fill="#d3d1ef"/><rect x="460.5" y="603" width="6.5" height="6.7" fill="#d3d1ef"/><rect x="466.8" y="603" width="6.5" height="6.7" fill="#b4afe2"/><rect x="473.0" y="603" width="6.5" height="6.7" fill="#c7c4ea"/><rect x="479.2" y="603" width="6.5" height="6.7" fill="#f0eff9"/><rect x="485.4" y="603" width="6.5" height="6.7" fill="#b4afe2"/><rect x="491.6" y="603" width="6.5" height="6.7" fill="#d3d1ef"/><rect x="497.9" y="603" width="6.5" height="6.7" fill="#d3d1ef"/><rect x="504.1" y="603" width="6.5" height="6.7" fill="#c7c4ea"/><rect x="510.3" y="603" width="6.5" height="6.7" fill="#c7c4ea"/><rect x="516.5" y="603" width="6.5" height="6.7" fill="#f0eff9"/><rect x="522.7" y="603" width="6.5" height="6.7" fill="#b4afe2"/><rect x="529.0" y="603" width="6.5" height="6.7" fill="#d3d1ef"/><rect x="535.2" y="603" width="6.5" height="6.7" fill="#e1e0f4"/><rect x="417.0" y="609.4" width="6.5" height="5.3" fill="#f0eff9"/><rect x="423.2" y="609.4" width="6.5" height="5.3" fill="#e1e0f4"/><rect x="429.4" y="609.4" width="6.5" height="5.3" fill="#d3d1ef"/><rect x="435.7" y="609.4" width="6.5" height="5.3" fill="#e1e0f4"/><rect x="441.9" y="609.4" width="6.5" height="5.3" fill="#e1e0f4"/><rect x="448.1" y="609.4" width="6.5" height="5.3" fill="#e1e0f4"/><rect x="454.3" y="609.4" width="6.5" height="5.3" fill="#f0eff9"/><rect x="460.5" y="609.4" width="6.5" height="5.3" fill="#f0eff9"/><rect x="466.8" y="609.4" width="6.5" height="5.3" fill="#e1e0f4"/><rect x="473.0" y="609.4" width="6.5" height="5.3" fill="#f0eff9"/><rect x="479.2" y="609.4" width="6.5" height="5.3" fill="#fbfbfe"/><rect x="485.4" y="609.4" width="6.5" height="5.3" fill="#e1e0f4"/><rect x="491.6" y="609.4" width="6.5" height="5.3" fill="#f0eff9"/><rect x="497.9" y="609.4" width="6.5" height="5.3" fill="#e1e0f4"/><rect x="504.1" y="609.4" width="6.5" height="5.3" fill="#e1e0f4"/><rect x="510.3" y="609.4" width="6.5" height="5.3" fill="#f0eff9"/><rect x="516.5" y="609.4" width="6.5" height="5.3" fill="#fbfbfe"/><rect x="522.7" y="609.4" width="6.5" height="5.3" fill="#d3d1ef"/><rect x="529.0" y="609.4" width="6.5" height="5.3" fill="#f0eff9"/><rect x="535.2" y="609.4" width="6.5" height="5.3" fill="#f0eff9"/><rect x="417.0" y="702.9" width="6.5" height="6.4" fill="#f0eff9"/><rect x="423.2" y="702.9" width="6.5" height="6.4" fill="#d3d1ef"/><rect x="429.4" y="702.9" width="6.5" height="6.4" fill="#d3d1ef"/><rect x="435.7" y="702.9" width="6.5" height="6.4" fill="#d3d1ef"/><rect x="441.9" y="702.9" width="6.5" height="6.4" fill="#d3d1ef"/><rect x="448.1" y="702.9" width="6.5" height="6.4" fill="#fbfbfe"/><rect x="454.3" y="702.9" width="6.5" height="6.4" fill="#e1e0f4"/><rect x="460.5" y="702.9" width="6.5" height="6.4" fill="#e1e0f4"/><rect x="466.8" y="702.9" width="6.5" height="6.4" fill="#d3d1ef"/><rect x="473.0" y="702.9" width="6.5" height="6.4" fill="#fbfbfe"/><rect x="479.2" y="702.9" width="6.5" height="6.4" fill="#fbfbfe"/><rect x="485.4" y="702.9" width="6.5" height="6.4" fill="#f0eff9"/><rect x="491.6" y="702.9" width="6.5" height="6.4" fill="#f0eff9"/><rect x="497.9" y="702.9" width="6.5" height="6.4" fill="#fbfbfe"/><rect x="504.1" y="702.9" width="6.5" height="6.4" fill="#e1e0f4"/><rect x="510.3" y="702.9" width="6.5" height="6.4" fill="#d3d1ef"/><rect x="516.5" y="702.9" width="6.5" height="6.4" fill="#f0eff9"/><rect x="417.0" y="709" width="6.5" height="6.5" fill="#f0eff9"/><rect x="423.2" y="709" width="6.5" height="6.5" fill="#d3d1ef"/><rect x="429.4" y="709" width="6.5" height="6.5" fill="#d3d1ef"/><rect x="435.7" y="709" width="6.5" height="6.5" fill="#b4afe2"/><rect x="441.9" y="709" width="6.5" height="6.5" fill="#c7c4ea"/><rect x="448.1" y="709" width="6.5" height="6.5" fill="#f0eff9"/><rect x="454.3" y="709" width="6.5" height="6.5" fill="#b4afe2"/><rect x="460.5" y="709" width="6.5" height="6.5" fill="#c7c4ea"/><rect x="466.8" y="709" width="6.5" height="6.5" fill="#b4afe2"/><rect x="473.0" y="709" width="6.5" height="6.5" fill="#c7c4ea"/><rect x="479.2" y="709" width="6.5" height="6.5" fill="#c7c4ea"/><rect x="485.4" y="709" width="6.5" height="6.5" fill="#c7c4ea"/><rect x="491.6" y="709" width="6.5" height="6.5" fill="#b4afe2"/><rect x="497.9" y="709" width="6.5" height="6.5" fill="#d3d1ef"/><rect x="504.1" y="709" width="6.5" height="6.5" fill="#e1e0f4"/><rect x="510.3" y="709" width="6.5" height="6.5" fill="#b4afe2"/><rect x="516.5" y="709" width="6.5" height="6.5" fill="#c7c4ea"/><rect x="417.0" y="715.25" width="6.5" height="5.7" fill="#f0eff9"/><rect x="423.2" y="715.25" width="6.5" height="5.7" fill="#fbfbfe"/><rect x="429.4" y="715.25" width="6.5" height="5.7" fill="#e1e0f4"/><rect x="435.7" y="715.25" width="6.5" height="5.7" fill="#e1e0f4"/><rect x="441.9" y="715.25" width="6.5" height="5.7" fill="#e1e0f4"/><rect x="448.1" y="715.25" width="6.5" height="5.7" fill="#f0eff9"/><rect x="454.3" y="715.25" width="6.5" height="5.7" fill="#f0eff9"/><rect x="460.5" y="715.25" width="6.5" height="5.7" fill="#e1e0f4"/><rect x="466.8" y="715.25" width="6.5" height="5.7" fill="#e1e0f4"/><rect x="473.0" y="715.25" width="6.5" height="5.7" fill="#e1e0f4"/><rect x="479.2" y="715.25" width="6.5" height="5.7" fill="#e1e0f4"/><rect x="485.4" y="715.25" width="6.5" height="5.7" fill="#f0eff9"/><rect x="491.6" y="715.25" width="6.5" height="5.7" fill="#e1e0f4"/><rect x="497.9" y="715.25" width="6.5" height="5.7" fill="#f0eff9"/><rect x="504.1" y="715.25" width="6.5" height="5.7" fill="#f0eff9"/><rect x="510.3" y="715.25" width="6.5" height="5.7" fill="#e1e0f4"/><rect x="516.5" y="715.25" width="6.5" height="5.7" fill="#f0eff9"/></g></svg>
</body></html>
